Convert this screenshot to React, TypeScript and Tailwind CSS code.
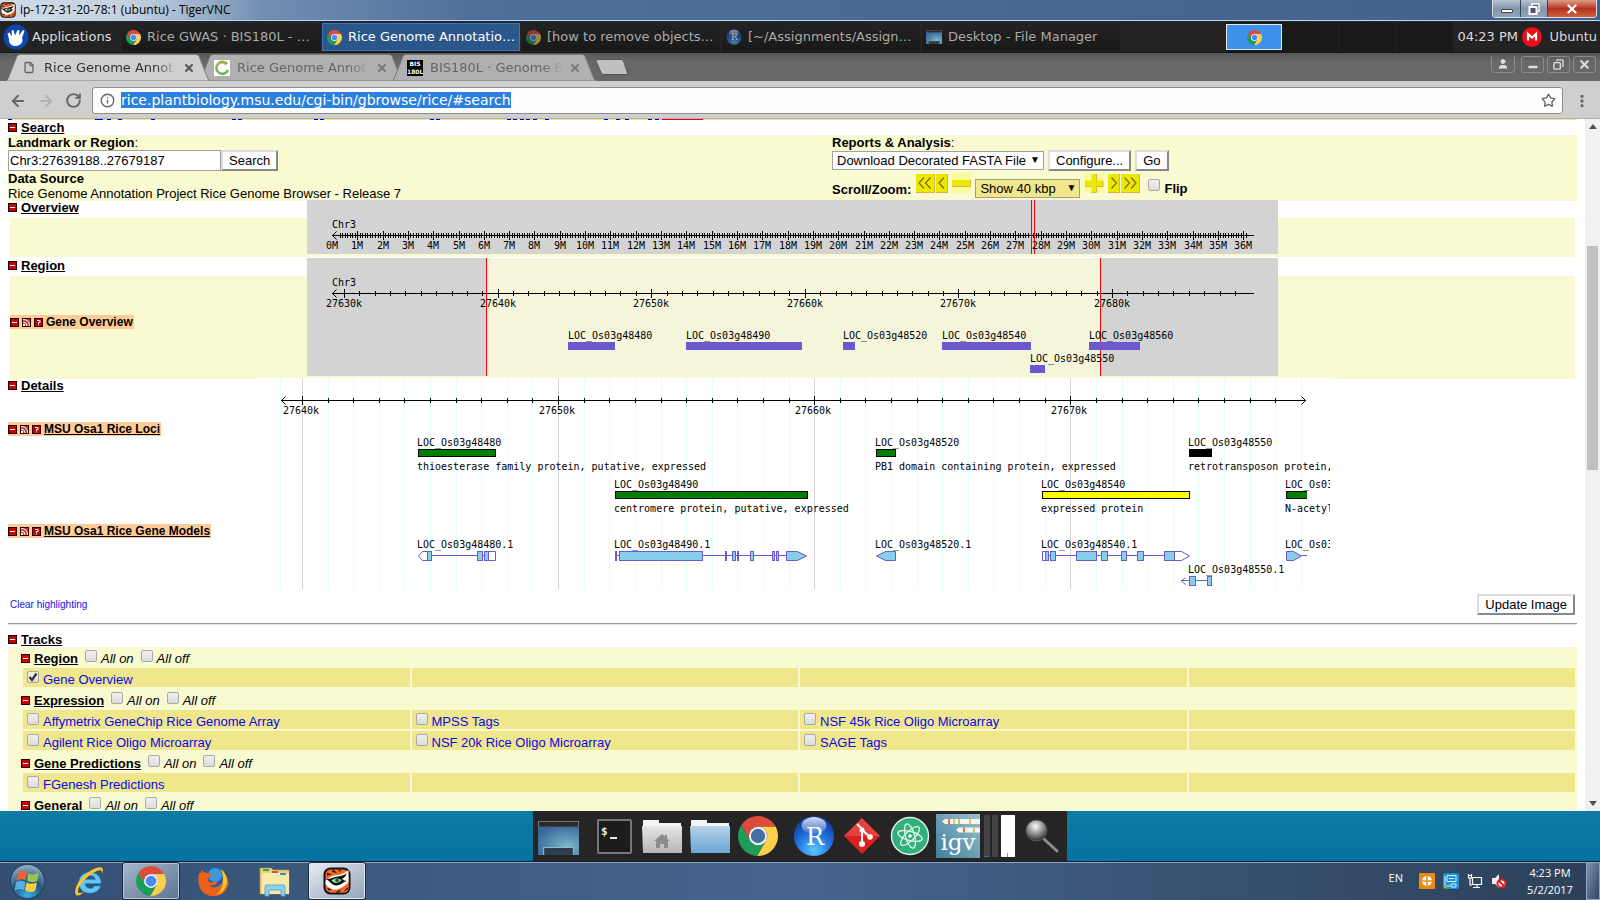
import React from "react";
import { User, Minus, X, Copy, Star, Info, File, ArrowLeft, ArrowRight, RotateCw, MoreVertical } from "lucide-react";

/* ---------- logos ---------- */

const BLADE = "M24 13H45.3A24 24 0 0 0 3.82 11.05L14.47 29.5A11 11 0 0 1 24 13Z";

function ChromeLogo({ className = "", core = "#4a8af4" }: { className?: string; core?: string }) {
  return (
    <svg viewBox="0 0 48 48" className={className} aria-hidden="true">
      <path d={BLADE} fill="#dd4b3e" />
      <path d={BLADE} fill="#fdd04b" transform="rotate(120 24 24)" />
      <path d={BLADE} fill="#1c9e59" transform="rotate(240 24 24)" />
      <circle cx="24" cy="24" r="11" fill="#f4f4f4" />
      <circle cx="24" cy="24" r="8.6" fill={core} />
    </svg>
  );
}

function RLogo({ className = "" }: { className?: string }) {
  return (
    <svg viewBox="0 0 44 44" className={className} aria-hidden="true">
      <defs>
        <radialGradient id="rball" cx="50%" cy="85%" r="75%">
          <stop offset="0" stopColor="#5cc8ff" />
          <stop offset="0.55" stopColor="#2474dd" />
          <stop offset="1" stopColor="#1340a8" />
        </radialGradient>
        <linearGradient id="rgloss" x1="0" y1="0" x2="0" y2="1">
          <stop offset="0" stopColor="#ffffff" stopOpacity="0.85" />
          <stop offset="1" stopColor="#ffffff" stopOpacity="0.1" />
        </linearGradient>
      </defs>
      <circle cx="22" cy="22" r="21" fill="url(#rball)" />
      <ellipse cx="22" cy="11" rx="13" ry="9" fill="url(#rgloss)" />
      <text x="23" y="31" textAnchor="middle" fontFamily="DejaVu Serif, serif" fontSize="25" fill="#fff">R</text>
    </svg>
  );
}

function TigerLogo({ className = "" }: { className?: string }) {
  return (
    <svg viewBox="0 0 28 28" className={className} aria-hidden="true">
      <rect x="0.5" y="0.5" width="27" height="27" rx="7" fill="#111" />
      <rect x="2.500" y="2.500" width="23" height="23" rx="5" fill="#f0682c" />
      <path d="M2.500 14C6 9 12 8 16 8c4-1 7-3 9.500-5v12c-3 7-8 9-13 9 -4-1-7-3-10-7z" fill="#fff" />
      <path d="M8 22c6 2 12-1 17.500-7v7q-1 3.500-4 3.500H7q-2-1-3-3z" fill="#f0682c" />
      <path d="M4 6l5 1.500L4 8.500zM10 2.500l4 3.500-5-1zM17 2.500l1 2.500-3-2zM4 21l5 1-3 1.500zM12 25.500l6-3-2 3zM20 25l5-5v2z" fill="#111" />
      <path d="M3 12c4 0 6-1 9-2 4-1 9-1 12-4-1 3-3 5-5 6 2 1 3 2 5 2-4 1-6 4-10 4.500C9 19 8 15 3 12z" fill="#111" />
      <path d="M8.500 13.500c3-2.500 6-2.500 10-.5-2 3-7 4.500-10 .5z" fill="#9fe0a8" />
      <circle cx="14" cy="13.500" r="1.800" fill="#155a2c" />
    </svg>
  );
}

function DesktopLogo({ className = "" }: { className?: string }) {
  return (
    <svg viewBox="0 0 40 36" className={className} preserveAspectRatio="none" aria-hidden="true">
      <defs>
        <radialGradient id="desk" cx="70%" cy="70%" r="80%">
          <stop offset="0" stopColor="#7ab9c9" />
          <stop offset="1" stopColor="#3a679c" />
        </radialGradient>
      </defs>
      <rect x="0.5" y="0.5" width="39" height="6" fill="#2a2a2a" stroke="#777" />
      <rect x="0" y="6.5" width="40" height="29.5" fill="url(#desk)" />
      <path d="M5.500 36V28h29v8" fill="#2d3f4c" stroke="#8fb9cc" />
    </svg>
  );
}

function MouseLogo({ className = "" }: { className?: string }) {
  return (
    <svg viewBox="0 0 26 26" className={className} aria-hidden="true">
      <circle cx="13" cy="13" r="12.5" fill="#0c47b0" />
      <path d="M4.500 9.500l2-1 2.500 4L8.500 6.500l2-.5 1.500 5.500L14.500 6l2 .3-.5 5.200 4-5.500 1.500 1-2.500 7c1.500 3 0 7-5.500 8-5 .5-8-3-7.500-7z" fill="#fff" />
    </svg>
  );
}

function MinusBox() {
  return (
    <svg viewBox="0 0 9 9" className="h-[9px] w-[9px] shrink-0" aria-hidden="true">
      <rect width="9" height="9" fill="#200" />
      <rect x="1" y="1" width="7" height="7" fill="#c00" />
      <rect x="2" y="4" width="5" height="1" fill="#fff" />
    </svg>
  );
}

function ShareBox() {
  return (
    <svg viewBox="0 0 9 9" className="h-[9px] w-[9px] shrink-0" aria-hidden="true">
      <rect width="9" height="9" fill="#200" />
      <rect x="1" y="1" width="7" height="7" fill="#c33" />
      <path d="M1 1.500q6.500 0 6.500 6.500M1 4q4 0 4 4" fill="none" stroke="#fff" />
      <rect x="1" y="6" width="2" height="2" fill="#fff" />
    </svg>
  );
}

function HelpBox() {
  return (
    <svg viewBox="0 0 9 9" className="h-[9px] w-[9px] shrink-0" aria-hidden="true">
      <rect width="9" height="9" fill="#200" />
      <rect x="1" y="1" width="7" height="7" fill="#c00" />
      <path d="M3 2.500h3v2H4.500V6M4.500 6.500V7.500" fill="none" stroke="#fff" />
    </svg>
  );
}

/* ---------- shared controls ---------- */

function Check({ id, checked = false, label }: { id: string; checked?: boolean; label?: string }) {
  return (
    <span className="relative inline-block h-3 w-3 shrink-0">
      <input
        id={id}
        type="checkbox"
        defaultChecked={checked}
        aria-label={label}
        className="peer block h-3 w-3 appearance-none rounded-[2px] border border-[#a9a9a9] bg-linear-to-b from-[#f0f0f0] to-[#dcdcdc]"
      />
      <svg viewBox="0 0 12 12" className="pointer-events-none absolute inset-0 hidden h-3 w-3 peer-checked:block" aria-hidden="true">
        <path d="M2.500 6l2.500 3L9.500 2.500" fill="none" stroke="#333" strokeWidth="2.200" />
      </svg>
    </span>
  );
}

function PushButton({ children }: { children: React.ReactNode }) {
  return (
    <button className="h-[21px] border-2 border-t-[#dddddd] border-l-[#dddddd] border-r-[#888888] border-b-[#888888] bg-white px-[6px] text-[13px] leading-[17px] text-black">
      {children}
    </button>
  );
}

function Heading({ children }: { children: React.ReactNode }) {
  return (
    <h2 className="flex items-center gap-1 font-bold">
      <MinusBox />
      <span className="underline">{children}</span>
    </h2>
  );
}

function TrackLabel({ children, underline = false }: { children: React.ReactNode; underline?: boolean }) {
  return (
    <div className="flex h-[14px] w-fit items-center gap-[3px] bg-[#ffcc99] pr-px text-[12px] font-bold leading-[14px]">
      <MinusBox />
      <ShareBox />
      <HelpBox />
      <span className={underline ? "underline" : ""}>{children}</span>
    </div>
  );
}

/* ---------- genome drawings ---------- */

const MONO = "'DejaVu Sans Mono', monospace";
const SLATE = "#6a5acd";
const SKY = "#87ceeb";

function Label({ x, y, children, middle = false }: { x: number; y: number; children: React.ReactNode; middle?: boolean }) {
  return (
    <text x={x} y={y + 4} fontFamily={MONO} fontSize="10" textAnchor={middle ? "middle" : "start"} fill="#000">
      {children}
    </text>
  );
}

function Tick({ x, y, major }: { x: number; y: number; major: boolean }) {
  const half = major ? 4 : 2;
  return <rect x={Math.round(x)} y={y - half} width="1" height={half * 2 + 1} fill="#000" />;
}

function OverviewMap() {
  const ticks = Array.from({ length: 361 }, (_, i) => i + 1).filter((i) => i > 2);
  return (
    <svg width="971" height="54" viewBox="0 0 971 54" role="img" aria-label="Chromosome overview">
      <rect width="971" height="54" fill="#d3d3d3" />
      <Label x={25} y={24}>Chr3</Label>
      <rect x="25" y="35" width="922" height="1" fill="#000" />
      <path d="M29.500 31.500l-4 4 4 4" fill="none" stroke="#000" />
      {ticks.map((i) => (
        <Tick key={i} x={25 + i * 2.531} y={35} major={i % 10 === 0} />
      ))}
      <rect x="724" width="1" height="54" fill="#f00" />
      <rect x="727" width="1" height="54" fill="#f00" />
      {Array.from({ length: 37 }, (_, m) => (
        <Label key={m} x={Math.round(25 + m * 25.31)} y={45} middle>{m}M</Label>
      ))}
    </svg>
  );
}

const REGION_GENES = [
  { name: "LOC_Os03g48480", x: 261, w: 47, y: 0 },
  { name: "LOC_Os03g48490", x: 379, w: 116, y: 0 },
  { name: "LOC_Os03g48520", x: 536, w: 12, y: 0 },
  { name: "LOC_Os03g48540", x: 635, w: 89, y: 0 },
  { name: "LOC_Os03g48550", x: 723, w: 15, y: 23 },
  { name: "LOC_Os03g48560", x: 782, w: 51, y: 0 },
];

function RegionMap() {
  return (
    <svg width="971" height="118" viewBox="0 0 971 118" role="img" aria-label="Region overview">
      <rect width="971" height="118" fill="#d3d3d3" />
      <rect x="179" width="614" height="118" fill="#f5f5dc" />
      <Label x={25} y={24}>Chr3</Label>
      <rect x="25" y="35" width="922" height="1" fill="#000" />
      <path d="M29.500 31.500l-4 4 4 4" fill="none" stroke="#000" />
      {Array.from({ length: 59 }, (_, i) => (
        <Tick key={i} x={37 + i * 15.36} y={35} major={i % 10 === 0} />
      ))}
      <rect x="179" width="1" height="118" fill="#f00" />
      <rect x="793" width="1" height="118" fill="#f00" />
      {Array.from({ length: 6 }, (_, i) => (
        <Label key={i} x={Math.round(37 + i * 153.600)} y={45} middle>{27630 + i * 10}k</Label>
      ))}
      {REGION_GENES.map((g) => (
        <g key={g.name}>
          <rect x={g.x} y={84 + g.y} width={g.w} height="8" fill={SLATE} />
          <Label x={g.x} y={77 + g.y}>{g.name}</Label>
        </g>
      ))}
    </svg>
  );
}

const LOCI = [
  { name: "LOC_Os03g48480", note: "thioesterase family protein, putative, expressed", x: 162, w: 77, row: 0, fill: "#008000" },
  { name: "LOC_Os03g48490", note: "centromere protein, putative, expressed", x: 359, w: 192, row: 1, fill: "#008000" },
  { name: "LOC_Os03g48520", note: "PB1 domain containing protein, expressed", x: 620, w: 19, row: 0, fill: "#008000" },
  { name: "LOC_Os03g48540", note: "expressed protein", x: 786, w: 147, row: 1, fill: "#ffff00" },
  { name: "LOC_Os03g48550", note: "retrotransposon protein,", x: 933, w: 22, row: 0, fill: "#000000" },
];

const MODELS = [
  { name: "LOC_Os03g48480.1", x: 162, y: 0 },
  { name: "LOC_Os03g48490.1", x: 359, y: 0 },
  { name: "LOC_Os03g48520.1", x: 620, y: 0 },
  { name: "LOC_Os03g48540.1", x: 786, y: 0 },
  { name: "LOC_Os03g48550.1", x: 933, y: 25 },
  { name: "LOC_Os03g48560.1", x: 1030, y: 0 },
];

/* exon boxes: left, right, row offset */
const EXONS: [number, number, number][] = [
  [171, 175, 0], [221, 226, 0], [228, 232, 0],
  [359, 360, 0], [363, 446, 0], [469, 470, 0], [476, 479, 0], [481, 482, 0], [494, 497, 0], [516, 518, 0], [520, 522, 0],
  [789, 792, 0], [794, 799, 0], [820, 840, 0], [845, 851, 0], [865, 870, 0], [881, 887, 0], [908, 918, 0],
  [933, 939, 25], [951, 955, 25],
];

const INTRONS: [number, number, number][] = [
  [175, 221, 0], [226, 228, 0], [360, 363, 0], [446, 530, 0], [792, 908, 0], [925, 951, 25], [1046, 1051, 0],
];

function DetailsMap() {
  return (
    <svg width="1074" height="211" viewBox="0 0 1074 211" role="img" aria-label="Details">
      <rect width="1074" height="211" fill="#fff" />
      <rect x="24" width="1" height="211" fill="#e0ffff" />
      {Array.from({ length: 40 }, (_, i) => (
        <rect key={i} x={Math.round(46 + i * 25.61)} width="1" height="211" fill={i % 10 === 0 ? "#d3d3d3" : "#e0ffff"} />
      ))}
      <rect x="25" y="22" width="1025" height="1" fill="#000" />
      <path d="M29.500 18.500l-4 4 4 4M1045.500 18.500l4 4-4 4" fill="none" stroke="#000" />
      {Array.from({ length: 39 }, (_, i) => (
        <Tick key={i} x={46 + i * 25.61} y={22} major={i % 10 === 0} />
      ))}
      {Array.from({ length: 4 }, (_, i) => (
        <Label key={i} x={Math.round(45 + i * 256.100)} y={32} middle>{27640 + i * 10}k</Label>
      ))}
      {LOCI.map((g) => (
        <g key={g.name}>
          <rect x={g.x + 0.5} y={71.5 + g.row * 42} width={g.w} height="7" fill={g.fill} stroke="#000" />
          <Label x={g.x - 1} y={64 + g.row * 42}>{g.name}</Label>
          <Label x={g.x - 1} y={88 + g.row * 42}>{g.note}</Label>
        </g>
      ))}
      <path d="M1051 113.500h-20.500v7h20.500" fill="#008000" stroke="#000" />
      <Label x={1029} y={106}>LOC_Os03g48560</Label>
      <Label x={1029} y={130}>N-acetyltransferase</Label>
      {MODELS.map((m) => (
        <Label key={m.name} x={m.x - 1} y={166 + m.y}>{m.name}</Label>
      ))}
      {INTRONS.map(([a, b, y]) => (
        <rect key={a} x={a} y={177 + y} width={b - a} height="1" fill={SLATE} />
      ))}
      <g stroke={SLATE} fill="#fff">
        <path d="M171.500 173.500h-5l-4 4.500 4 4.500h5z" />
        <path d="M232.500 173.500h7v9h-7z" />
        <path d="M786.500 173.500h3v9h-3z" />
        <path d="M918.500 173.500h7l8 4.500-8 4.500h-7z" />
      </g>
      <g stroke={SLATE} fill={SKY}>
        {EXONS.map(([a, b, y]) => (
          <rect key={a} x={a + 0.5} y={173.5 + y} width={b - a} height="9" />
        ))}
        <path d="M530.500 173.500h11l9 4.500-9 4.500h-11z" />
        <path d="M639.500 173.500h-10l-9 4.500 9 4.500h10z" />
        <path d="M1030.500 173.500h7l8 4.500-8 4.500h-7z" />
      </g>
      <path d="M929.500 199.500l-4 3.500 4 3.500" fill="none" stroke={SLATE} />
    </svg>
  );
}

/* ---------- window chrome ---------- */

function TitleBar() {
  return (
    <header className="flex h-[22px] shrink-0 items-start justify-between border-b border-[#1c2a3c] bg-linear-to-r from-[#9fb6cf] via-[#4c6f9b] via-30% to-[#41618b] shadow-[inset_0_-1px_0_#c4d3e4]">
      <div className="flex h-5 items-center gap-1 rounded-r-full bg-linear-to-r from-white/50 via-white/50 to-transparent pr-8">
        <TigerLogo className="h-4 w-4" />
        <span className="font-['Open_Sans','Noto_Sans',sans-serif] text-[12px] leading-5 text-black">ip-172-31-20-78:1 (ubuntu) - TigerVNC</span>
      </div>
      <div className="mr-[3px] flex h-[18px] overflow-hidden rounded-b-[4px] border border-t-0 border-[#d5dde8]">
        <button aria-label="Minimize" className="flex w-7 items-center justify-center border-r border-[#32435a] bg-linear-to-b from-[#b9c4d2] via-[#8595aa] via-50% to-[#8fa3bd]">
          <span className="mt-1 h-1 w-3 rounded-[1px] border border-[#445] bg-white" />
        </button>
        <button aria-label="Restore" className="flex w-[27px] items-center justify-center border-r border-[#32435a] bg-linear-to-b from-[#b9c4d2] via-[#8595aa] via-50% to-[#8fa3bd]">
          <svg viewBox="0 0 12 12" className="h-3 w-3" aria-hidden="true">
            <path d="M4 1h7v7H4z" fill="#556" stroke="#fff" strokeWidth="1.500" />
            <path d="M1.500 4h7v7h-7z" fill="#556" stroke="#fff" strokeWidth="2" />
          </svg>
        </button>
        <button aria-label="Close" className="flex w-12 items-center justify-center bg-linear-to-b from-[#dd9c8c] via-[#b5331c] via-50% to-[#d0603e]">
          <X className="h-[14px] w-[14px] text-white" strokeWidth={4} />
        </button>
      </div>
    </header>
  );
}

const TASKS = [
  { text: "Rice GWAS · BIS180L - …", icon: "chrome" },
  { text: "Rice Genome Annotatio…", icon: "chrome", active: true },
  { text: "[how to remove objects…", icon: "chrome", dim: true },
  { text: "[~/Assignments/Assign…", icon: "r", dim: true },
  { text: "Desktop - File Manager", icon: "desk" },
];

function TopPanel() {
  return (
    <nav className="flex h-[31px] shrink-0 items-center justify-between border-b border-[#151515] bg-[#232323] font-['DejaVu_Sans',sans-serif] text-[13px] text-[#dcdcdc]">
      <div className="flex h-full items-center">
        <button className="flex w-[121px] items-center gap-[3px] pl-[3px]">
          <MouseLogo className="h-[26px] w-[26px]" />
          Applications
        </button>
        {TASKS.map((t) => (
          <button
            key={t.text}
            className={
              t.active
                ? "mx-px flex h-7 w-[198px] items-center gap-[6px] whitespace-nowrap border border-[#3c76b8] bg-[#2b568a] pl-1 text-white"
                : "mx-px flex h-7 w-[198px] items-center gap-[6px] whitespace-nowrap bg-linear-to-b from-[#232323] to-[#191919] pl-1 text-[#aaaaaa]"
            }
          >
            {t.icon === "chrome" && <ChromeLogo className={t.dim ? "h-[15px] w-[15px] opacity-60" : "h-[15px] w-[15px]"} />}
            {t.icon === "r" && <RLogo className="h-4 w-4 opacity-60" />}
            {t.icon === "desk" && <DesktopLogo className="h-[14px] w-4" />}
            {t.text}
          </button>
        ))}
      </div>
      <div className="flex h-full items-center">
        <div className="flex h-full items-center bg-[#191919]">
          <button aria-label="Workspace 1" className="flex h-[26px] w-14 items-center justify-center border border-[#e8e8e8] bg-[#3f92ea]">
            <ChromeLogo className="h-[15px] w-[15px]" />
          </button>
          <button aria-label="Workspace 2" className="h-full w-[57px] border-r border-[#232323]" />
          <button aria-label="Workspace 3" className="h-full w-[57px] border-r border-[#232323]" />
          <button aria-label="Workspace 4" className="h-full w-[57px]" />
        </div>
        <span className="w-[69px] pl-1 whitespace-nowrap">04:23 PM</span>
        <svg viewBox="0 0 20 20" className="h-5 w-5" aria-hidden="true">
          <circle cx="10" cy="10" r="10" fill="#e8101a" />
          <path d="M6 13.500V7L10 10.500l4-3.500v6.500" fill="none" stroke="#fff" strokeWidth="2.200" />
        </svg>
        <span className="pl-[7px] pr-[3px]">Ubuntu</span>
      </div>
    </nav>
  );
}

function TabShape({ fill }: { fill: string }) {
  return (
    <svg viewBox="0 0 206 27" preserveAspectRatio="none" className="absolute inset-0 h-full w-full" aria-hidden="true">
      <path d="M0 27L2 25L11 2.500Q12 0.500 14 0.500H191Q193 0.500 194 2.500L203 25L206 27Z" fill={fill} stroke="#7b7b7b" strokeWidth="1" />
    </svg>
  );
}

const TABS = [
  { text: "Rice Genome Annotation", kind: "file" },
  { text: "Rice Genome Annotation", kind: "ring" },
  { text: "BIS180L · Genome Bio", kind: "bis" },
];

function TabStrip() {
  return (
    <div className="flex h-[28px] shrink-0 items-start justify-between bg-linear-to-b from-[#565656] to-[#686868] to-30% font-['DejaVu_Sans',sans-serif] text-[13px]">
      <div className="flex h-full items-end pl-[6px]">
        {TABS.map((t, i) => (
          <div key={i} className={i === 0 ? "relative z-10 -mr-3 h-[27px] w-[205px]" : "relative -mr-3 h-[27px] w-[205px]"}>
            <TabShape fill={i === 0 ? "#cfcfcf" : "#b0b0b0"} />
            <div className={i === 0 ? "relative flex h-full items-center pl-[15px] text-[#333333]" : "relative flex h-full items-center pl-[15px] text-[#666666]"}>
              {t.kind === "file" && <File className="ml-[2px] mr-[9px] h-[15px] w-3 text-[#666]" strokeWidth={2.6} />}
              {t.kind === "ring" && (
                <svg viewBox="0 0 16 16" className="mr-[7px] h-4 w-4" aria-hidden="true">
                  <rect width="16" height="16" fill="#fff" />
                  <path d="M13 4A6 6 0 1 0 14 10" fill="none" stroke="#6fb84b" strokeWidth="2.500" />
                  <path d="M12 5A5 5 0 0 0 3 7" fill="none" stroke="#e0a848" strokeWidth="1.500" />
                </svg>
              )}
              {t.kind === "bis" && (
                <span className="mr-[7px] block h-4 w-4 bg-black text-center text-[6px] font-bold leading-[8px] text-white">BIS 180L</span>
              )}
              <span className="w-[132px] overflow-hidden whitespace-nowrap [mask-image:linear-gradient(to_right,black_85%,transparent)]">{t.text}</span>
              <button aria-label="Close tab" className={i === 0 ? "ml-[7px] text-[#555555]" : "ml-[7px] text-[#7a7a7a]"}>
                <X className="h-3 w-3" strokeWidth={4} />
              </button>
            </div>
          </div>
        ))}
        <button aria-label="New tab" className="ml-[10px] self-center">
          <svg viewBox="0 0 34 16" className="block h-4 w-[34px]" aria-hidden="true">
            <path d="M2 .5H26Q28 .5 28.500 2L33 15.500H9Q7 15.500 6 13.500L1 2Z" fill="#c0c0c0" stroke="#555" />
          </svg>
        </button>
      </div>
      <div className="mr-1 mt-[3px] flex h-[17px] gap-[3px] text-[#dddddd]">
        <button aria-label="Profile" className="mr-[3px] flex w-6 items-center justify-center rounded-b-[4px] border border-t-0 border-[#8b8b8b]">
          <User className="h-3 w-3" fill="currentColor" />
        </button>
        <button aria-label="Minimize" className="flex w-[23px] items-center justify-center rounded-[3px] border border-[#8b8b8b]">
          <Minus className="mt-1 h-3 w-3" strokeWidth={5} />
        </button>
        <button aria-label="Restore" className="flex w-[23px] items-center justify-center rounded-[3px] border border-[#8b8b8b]">
          <Copy className="h-[11px] w-[11px] -scale-x-100" strokeWidth={3} />
        </button>
        <button aria-label="Close" className="flex w-[23px] items-center justify-center rounded-[3px] border border-[#8b8b8b]">
          <X className="h-[13px] w-[13px]" strokeWidth={4} />
        </button>
      </div>
    </div>
  );
}

function Toolbar() {
  return (
    <div className="flex h-[38px] shrink-0 items-center border-b border-[#b0b0b0] bg-[#cfcfcf] pt-[2px] text-[#666666]">
      <div className="flex w-[92px] items-center gap-[10px] pl-[9px]">
        <button aria-label="Back"><ArrowLeft className="h-[18px] w-[18px]" strokeWidth={2.5} /></button>
        <button aria-label="Forward" className="text-[#b4b4b4]"><ArrowRight className="h-[18px] w-[18px]" strokeWidth={2.5} /></button>
        <button aria-label="Reload"><RotateCw className="h-[17px] w-[17px]" strokeWidth={2.8} /></button>
      </div>
      <div className="flex h-[27px] min-w-0 flex-1 items-center gap-[6px] rounded-[3px] border border-[#8e8e8e] bg-[#fdfdfd] pl-[7px] pr-[6px]">
        <Info className="h-[15px] w-[15px] shrink-0" strokeWidth={2.2} />
        <div className="min-w-0 flex-1 font-['DejaVu_Sans',sans-serif] text-[14px] leading-[17px]">
          <a href="#search" className="bg-[#2a80dc] text-white">rice.plantbiology.msu.edu/cgi-bin/gbrowse/rice/#search</a>
        </div>
        <Star className="h-[15px] w-[15px] shrink-0" strokeWidth={2.2} />
      </div>
      <button aria-label="Menu" className="flex w-[37px] justify-center"><MoreVertical className="h-4 w-4" strokeWidth={3} /></button>
    </div>
  );
}

/* ---------- page ---------- */

function ClippedRow() {
  const dashes = [8, 95, 99, 107, 118, 151, 232, 238, 314, 320, 430, 436, 507, 513, 520, 526, 533, 545, 604, 616, 625, 648, 655];
  return (
    <svg className="block h-[2px] w-full" aria-hidden="true">
      <rect width="100%" height="1" fill="#f0e68c" />
      {dashes.map((x) => (
        <rect key={x} x={x - 8} width="4" height="1" fill="#00c" />
      ))}
      <rect x="654" width="41" height="1" fill="#e00" />
    </svg>
  );
}

function Arrows({ dir, count, label }: { dir: "left" | "right"; count: number; label: string }) {
  return (
    <button aria-label={label} className={count === 2 ? "h-[19px] w-[19px] border-r border-b border-[#e0b040] bg-[#eaea00]" : "h-[19px] w-3 border-r border-b border-[#e0b040] bg-[#eaea00]"}>
      <svg viewBox={count === 2 ? "0 0 18 18" : "0 0 11 18"} className="block h-full w-full" aria-hidden="true">
        <path
          d={
            dir === "left"
              ? count === 2 ? "M8 3.500L3 9l5 5.500M14.500 3.500l-5 5.500 5 5.500" : "M8 3.500L3 9l5 5.500"
              : count === 2 ? "M3.500 3.500l5 5.500-5 5.500M10 3.500l5 5.500-5 5.500" : "M3.500 3.500L8.500 9L3.500 14.500"
          }
          fill="none"
          stroke="#8f5f00"
          strokeWidth="1.200"
        />
      </svg>
    </button>
  );
}

function SearchPanel() {
  return (
    <div className="grid grid-cols-[824fr_745fr] bg-[#fafad2]">
      <div>
        <label htmlFor="landmark" className="block h-[15px] font-bold leading-[15px]">Landmark or Region<span className="font-normal">:</span></label>
        <div className="flex h-[21px]">
          <input id="landmark" defaultValue="Chr3:27639188..27679187" className="w-[213px] border border-[#a0a0a0] bg-white px-px text-[13px] text-black" />
          <PushButton>Search</PushButton>
        </div>
        <div className="h-[15px] font-bold leading-[15px]">Data Source</div>
        <div className="h-[15px] whitespace-nowrap leading-[15px]">Rice Genome Annotation Project Rice Genome Browser - Release 7</div>
      </div>
      <div>
        <label htmlFor="report" className="block h-[15px] font-bold leading-[15px]">Reports &amp; Analysis<span className="font-normal">:</span></label>
        <div className="flex h-[21px] items-center gap-1">
          <span className="relative">
            <select id="report" className="block h-[19px] w-[212px] appearance-none border border-[#a0a0a0] bg-white pl-1 text-[13px] leading-[17px] text-black">
              <option>Download Decorated FASTA File</option>
            </select>
            <span className="pointer-events-none absolute right-1 top-0 text-[10px] leading-[17px]">▼</span>
          </span>
          <PushButton>Configure...</PushButton>
          <PushButton>Go</PushButton>
        </div>
        <div className="flex h-[28px] items-start pt-[2px]">
          <label htmlFor="span" className="pt-2 pr-[5px] font-bold leading-[17px]">Scroll/Zoom:</label>
          <div className="flex gap-px pt-px">
            <Arrows dir="left" count={2} label="Scroll left far" />
            <Arrows dir="left" count={1} label="Scroll left" />
          </div>
          <button aria-label="Zoom out" className="mx-1 flex h-5 w-[19px] items-center bg-[#fafa9a]">
            <span className="h-[7px] w-full border-r border-b border-[#e0b040] bg-[#eaea00]" />
          </button>
          <span className="relative pt-[6px]">
            <select id="span" className="block h-[19px] w-[105px] appearance-none border border-[#a0a080] bg-[#f0e68c] pl-1 text-[13px] leading-[17px] text-black">
              <option>Show 40 kbp</option>
            </select>
            <span className="pointer-events-none absolute right-1 top-[6px] text-[10px] leading-[17px]">▼</span>
          </span>
          <button aria-label="Zoom in" className="mx-1 h-5 w-5 bg-[#fafa9a]">
            <svg viewBox="0 0 20 20" className="block h-5 w-5" aria-hidden="true">
              <path d="M7.500 1h5v6.500H19v6h-6.500V19.500h-5V13.500H1v-6h6.500z" fill="#eaea00" />
              <path d="M12.500 1v6.500M19 8v5.500h-6.500v6h-5M1 13.500h6.500" fill="none" stroke="#e0b040" />
            </svg>
          </button>
          <div className="flex gap-px pt-px">
            <Arrows dir="right" count={1} label="Scroll right" />
            <Arrows dir="right" count={2} label="Scroll right far" />
          </div>
          <div className="flex gap-1 pl-2 pt-[6px]">
            <Check id="flip" />
            <label htmlFor="flip" className="pt-px font-bold leading-[17px]">Flip</label>
          </div>
        </div>
      </div>
    </div>
  );
}

function MapSection({ title, className, map, children }: { title: string; className: string; map: React.ReactNode; children: React.ReactNode }) {
  return (
    <section className={className}>
      <div className="col-start-1 row-start-1 flex justify-center [&>svg]:block [&>svg]:shrink-0">{map}</div>
      <div className="col-start-1 row-start-1 -z-10 flex flex-col">
        <div className="flex h-[18px] items-start"><Heading>{title}</Heading></div>
        {children}
      </div>
    </section>
  );
}

const GROUPS = [
  { name: "Region", rows: [["Gene Overview", "", "", ""]] },
  {
    name: "Expression",
    rows: [
      ["Affymetrix GeneChip Rice Genome Array", "MPSS Tags", "NSF 45k Rice Oligo Microarray", ""],
      ["Agilent Rice Oligo Microarray", "NSF 20k Rice Oligo Microarray", "SAGE Tags", ""],
    ],
  },
  { name: "Gene Predictions", rows: [["FGenesh Predictions", "", "", ""]] },
  { name: "General", rows: [] as string[][] },
];

function Tracks() {
  return (
    <div className="bg-[#fafad2] pb-8 pl-[13px]">
      {GROUPS.map((g) => (
        <div key={g.name}>
          <div className="flex h-[19px] items-center pt-[3px]">
            <Heading>{g.name}</Heading>
            {["on", "off"].map((s) => (
              <span key={s} className="ml-[7px] flex items-start gap-1">
                <Check id={`${g.name}-${s}`} />
                <label htmlFor={`${g.name}-${s}`} className="pt-px italic leading-[15px]">All {s}</label>
              </span>
            ))}
          </div>
          {g.rows.length > 0 && (
            <table className="w-full table-fixed border-separate border-spacing-[2px]">
              <tbody>
                {g.rows.map((row, r) => (
                  <tr key={r}>
                    {row.map((cell, c) => (
                      <td key={c} className="h-[19px] bg-[#f0e68c] p-0">
                        {cell && (
                          <span className="flex h-[19px] items-start gap-1 pl-1 pt-[3px]">
                            <Check id={cell} checked={cell === "Gene Overview"} label={cell} />
                            <a href="#track" className="leading-[17px] text-[#0808ea]">{cell}</a>
                          </span>
                        )}
                      </td>
                    ))}
                  </tr>
                ))}
              </tbody>
            </table>
          )}
        </div>
      ))}
    </div>
  );
}

function Page() {
  return (
    <div className="flex min-h-0 flex-1 bg-white font-['Liberation_Sans',Arial,sans-serif] text-[13px] leading-[15px] text-black">
      <main className="isolate min-w-0 flex-1 overflow-hidden px-2">
        <ClippedRow />
        <div className="flex h-[14px] items-end"><Heading>Search</Heading></div>
        <SearchPanel />
        <MapSection title="Overview" className="relative z-10 -mt-px grid isolate" map={<OverviewMap />}>
          <div className="mx-[2px] h-[39px] bg-[#fafad2]" />
        </MapSection>
        <MapSection title="Region" className="relative mt-px grid isolate" map={<RegionMap />}>
          <div className="mx-[2px] h-[103px] bg-[#fafad2] pt-[39px]">
            <TrackLabel>Gene Overview</TrackLabel>
          </div>
        </MapSection>
        <MapSection title="Details" className="relative -mt-px grid isolate" map={<DetailsMap />}>
          <div className="flex flex-col gap-[88px] pt-[26px]">
            <TrackLabel underline>MSU Osa1 Rice Loci</TrackLabel>
            <TrackLabel underline>MSU Osa1 Rice Gene Models</TrackLabel>
          </div>
        </MapSection>
        <div className="mx-[2px] mt-[5px] flex items-center justify-between">
          <a href="#clear" className="text-[10px] text-[#1111ee]">Clear highlighting</a>
          <PushButton>Update Image</PushButton>
        </div>
        <hr className="mt-2 h-[2px] border-t border-b border-t-[#9a9a9a] border-b-[#e4e4e4]" />
        <div className="mt-2 flex h-[14px] items-end"><Heading>Tracks</Heading></div>
        <Tracks />
      </main>
      <div className="flex w-[15px] shrink-0 flex-col items-center justify-between bg-[#f1f1f1] py-[5px]" aria-hidden="true">
        <svg viewBox="0 0 8 5" className="h-[5px] w-2"><path d="M0 5L4 0l4 5z" fill="#505050" /></svg>
        <div className="flex w-full flex-1 flex-col items-center">
          <div className="basis-[17.4%]" />
          <div className="w-[11px] basis-[33.3%] bg-[#c1c1c1]" />
        </div>
        <svg viewBox="0 0 8 5" className="h-[5px] w-2"><path d="M0 0h8L4 5z" fill="#505050" /></svg>
      </div>
    </div>
  );
}

/* ---------- dock ---------- */

function Folder({ home = false }: { home?: boolean }) {
  return (
    <svg viewBox="0 0 42 36" className="h-9 w-[42px]" aria-hidden="true">
      <defs>
        <linearGradient id={home ? "fh" : "fb"} x1="0" y1="0" x2="0" y2="1">
          <stop offset="0" stopColor={home ? "#e6e6e6" : "#b5d3ea"} />
          <stop offset="1" stopColor={home ? "#b5b5b5" : "#6aa5d3"} />
        </linearGradient>
      </defs>
      <path d="M2 5V2h16v3h22v5H2z" fill="#f4f4f4" />
      <path d="M1 8h40v27H2z" fill={home ? "url(#fh)" : "url(#fb)"} />
      {home && <path d="M21 16l-8 7h2v7h4v-4h4v4h4v-7h2l-3-2.500V17h-2v1.500z" fill="#8c8c8c" />}
    </svg>
  );
}

function Slot({ label, children }: { label: string; children: React.ReactNode }) {
  return <button aria-label={label} className="flex h-[50px] w-12 items-center justify-center">{children}</button>;
}

function Dock() {
  return (
    <div className="flex h-[50px] shrink-0 justify-center bg-linear-to-b from-[#0e7ba5] to-[#0573a1]">
      <div className="flex items-center bg-[#252525] px-px">
        <Slot label="Show desktop"><DesktopLogo className="mt-1 h-[34px] w-[41px]" /></Slot>
        <div className="w-2" />
        <Slot label="Terminal">
          <svg viewBox="0 0 35 35" className="h-[35px] w-[35px]" aria-hidden="true">
            <rect x="1" y="1" width="33" height="33" rx="1" fill="#1c1c1c" stroke="#777" strokeWidth="2" />
            <text x="4" y="16" fontFamily={MONO} fontSize="11" fontWeight="bold" fill="#e8e8e8">$</text>
            <rect x="13" y="18" width="7" height="2" fill="#e8e8e8" />
          </svg>
        </Slot>
        <Slot label="Home folder"><Folder home /></Slot>
        <Slot label="Folder"><Folder /></Slot>
        <Slot label="Chrome"><ChromeLogo className="h-10 w-10" core="#44719f" /></Slot>
        <div className="w-2" />
        <Slot label="RStudio"><RLogo className="h-[42px] w-[42px]" /></Slot>
        <Slot label="Git">
          <svg viewBox="0 0 38 38" className="h-[38px] w-[38px]" aria-hidden="true">
            <path d="M19 1l18 18-18 18L1 19z" fill="#dc1f1f" />
            <path d="M19 1l18 18H1z" fill="#ea6660" opacity="0.500" />
            <path d="M14 7l5 5v15M19 13l7 6" stroke="#fff" strokeWidth="2" fill="none" />
            <circle cx="19" cy="13" r="2.500" fill="#fff" />
            <circle cx="19" cy="27" r="3" fill="#fff" />
            <circle cx="27" cy="20" r="2.800" fill="#fff" />
          </svg>
        </Slot>
        <Slot label="Atom">
          <svg viewBox="0 0 40 40" className="h-10 w-10" aria-hidden="true">
            <circle cx="20" cy="20" r="18.500" fill="#31b07c" stroke="#dfeee6" strokeWidth="1.500" />
            <g fill="none" stroke="#e6f7ef" strokeWidth="1.300">
              <ellipse cx="20" cy="20" rx="12.500" ry="4.500" transform="rotate(15 20 20)" />
              <ellipse cx="20" cy="20" rx="12.500" ry="4.500" transform="rotate(75 20 20)" />
              <ellipse cx="20" cy="20" rx="12.500" ry="4.500" transform="rotate(135 20 20)" />
            </g>
            <circle cx="20" cy="20" r="1.800" fill="#fff" />
          </svg>
        </Slot>
        <Slot label="IGV">
          <svg viewBox="0 0 44 44" className="h-11 w-11" aria-hidden="true">
            <defs>
              <linearGradient id="igv" x1="1" y1="0" x2="0" y2="1">
                <stop offset="0" stopColor="#9cc0cf" />
                <stop offset="1" stopColor="#3c7f9b" />
              </linearGradient>
            </defs>
            <rect width="44" height="44" fill="url(#igv)" />
            <path d="M6 7.500L9 5h35v5H9zM20 16l3-2.500h21v5H23z" fill="#f5f5f0" />
            <path d="M13 5v5M28 13.500v5" stroke="#e8603c" strokeWidth="1.800" />
            <path d="M18 5v5M34 5v5" stroke="#f0b030" strokeWidth="1.500" />
            <path d="M23 5v5M38 13.500v5" stroke="#9aba4a" strokeWidth="1.500" />
            <text x="22" y="36" textAnchor="middle" fontFamily="DejaVu Serif, serif" fontSize="23" fill="#fff">igv</text>
          </svg>
        </Slot>
        <svg viewBox="0 0 36 44" className="h-11 w-9" aria-hidden="true">
          <rect x="2" y="1" width="6" height="42" fill="#444" />
          <rect x="10" y="1" width="6" height="42" fill="#444" />
          <rect x="2" y="42" width="6" height="1" fill="#2a6db0" />
          <rect x="19" y="1" width="14" height="42" fill="#fff" />
          <rect x="25" y="39" width="1" height="4" fill="#0f0" />
        </svg>
        <Slot label="Search">
          <svg viewBox="0 0 40 40" className="h-10 w-10" aria-hidden="true">
            <defs>
              <radialGradient id="lens" cx="45%" cy="30%" r="65%">
                <stop offset="0" stopColor="#ffffff" />
                <stop offset="0.6" stopColor="#8a8a8a" />
                <stop offset="1" stopColor="#3c3c3c" />
              </radialGradient>
            </defs>
            <path d="M22 23l13 12" stroke="#8c8c8c" strokeWidth="3" strokeLinecap="round" />
            <circle cx="14.500" cy="14.500" r="10.500" fill="url(#lens)" stroke="#555" />
          </svg>
        </Slot>
      </div>
    </div>
  );
}

/* ---------- Windows taskbar ---------- */

function StartOrb() {
  return (
    <svg viewBox="0 0 38 38" className="h-[37px] w-[37px]" aria-hidden="true">
      <defs>
        <radialGradient id="orb" cx="50%" cy="90%" r="90%">
          <stop offset="0" stopColor="#36b4e4" />
          <stop offset="0.5" stopColor="#23577f" />
          <stop offset="1" stopColor="#9cb4cb" />
        </radialGradient>
      </defs>
      <circle cx="19" cy="19" r="17.500" fill="url(#orb)" stroke="#1b3c5c" />
      <path d="M9.500 10c3-2.500 6-2.500 9-.5L17 18c-3-2-6-1.500-9.500.5z" fill="#e8633a" />
      <path d="M19.800 10.500c3 2 6.500 1.500 10.700-.5L29 18.500c-4 2-7.500 1.500-10.500-.5z" fill="#92c94c" />
      <path d="M7.200 20c3-2.500 6.500-2 9.500-.5L15.300 28c-3-2-6-1.500-9.500.5z" fill="#5ab0e6" />
      <path d="M18 20c3 2 7 1.500 10.700 0L27 28.500c-3.500 2-7.500 1.500-10.300-.5z" fill="#f9cd45" />
    </svg>
  );
}

function IeLogo() {
  return (
    <svg viewBox="0 0 32 32" className="h-8 w-8" aria-hidden="true">
      <path
        d="M28 18.500H12c.3 5.500 7.500 6.500 9.500 2.500H27.500C25 31 6 31 6 17.500 6 4 28 3.500 28 18.500zM12 14.500h10.500c-.8-5.500-9.800-5.500-10.500 0z"
        fill="#62c6f5"
        stroke="#2a8ed0"
        strokeWidth="0.600"
        fillRule="evenodd"
      />
      <path d="M3 30C-1 24 9 8 23 3c7-2.500 8 1 6 6 .5-4-1.500-4.500-5-3C14 10 4 22 5 27c1 2 4 1 7-1-4 4-7.500 5.500-9 4z" fill="#f8c528" />
    </svg>
  );
}

function FirefoxLogo() {
  return (
    <svg viewBox="0 0 32 32" className="h-8 w-8" aria-hidden="true">
      <circle cx="17" cy="14.500" r="12.500" fill="#2659a8" />
      <circle cx="18" cy="10" r="7" fill="#3d9ad8" />
      <path d="M2 8c1 0 2 0 3-3 1 2 3 3 6 3 2 0 4 1 3 3-1 1-3 1-3 3 0 3 3 4 5 3 3-1 4 0 4 1-2 3-6 3-8 2 5 5 14 1 14-6 1-3 0-6-2-9 8 6 9 14 5 20-6 9-22 8-26-2C1 18 1 13 2 8z" fill="#e8621c" />
      <path d="M24 4c6 5 8 13 4 19-2 4-6 6-9 7 7-5 9-14 5-26z" fill="#fbc42e" />
    </svg>
  );
}

function ExplorerLogo() {
  return (
    <svg viewBox="0 0 34 32" className="h-8 w-[34px]" aria-hidden="true">
      <path d="M2 3h11l2 2h16v24H2z" fill="#e9d27c" stroke="#b59a40" strokeWidth="0.600" />
      <path d="M4 8h27v21H4z" fill="#f7e9a8" />
      <path d="M5 4h6v2H5z" fill="#3da04c" />
      <path d="M14 6h6v2h-6z" fill="#d8543c" />
      <path d="M22 8h6v2h-6z" fill="#3f86d0" />
      <path d="M7 31V22q0-2 2-2h16q2 0 2 2v9h-4v-6H11v6z" fill="#8fd0ef" stroke="#4b9cc8" strokeWidth="0.800" />
    </svg>
  );
}

function Taskbar() {
  return (
    <footer className="flex h-[39px] shrink-0 items-stretch justify-between border-t border-[#122031] bg-linear-to-r from-[#354f72] via-[#45658f] to-[#2c4058] font-['Open_Sans','Noto_Sans',sans-serif] text-white shadow-[inset_0_1px_0_#8ea3bd]">
      <div className="flex items-center">
        <button aria-label="Start" className="flex w-[54px] justify-center"><StartOrb /></button>
        <div className="flex h-full gap-1 pl-[6px]">
          <button aria-label="Internet Explorer" className="flex w-[58px] items-center justify-center"><IeLogo /></button>
          <button aria-label="Chrome" className="flex w-[58px] items-center justify-center rounded-[3px] border border-[#1b2a3e] bg-linear-to-br from-[#a9b8cb] to-[#5d7492] shadow-[inset_0_0_0_1px_#b8c6d6]">
            <ChromeLogo className="h-[30px] w-[30px]" />
          </button>
          <button aria-label="Firefox" className="flex w-[58px] items-center justify-center"><FirefoxLogo /></button>
          <button aria-label="Explorer" className="flex w-[58px] items-center justify-center"><ExplorerLogo /></button>
          <button aria-label="TigerVNC" className="flex w-[58px] items-center justify-center rounded-[3px] border border-[#1b2a3e] bg-linear-to-br from-[#e8edf3] to-[#93a3b8] shadow-[inset_0_0_0_1px_#e3e9f0]">
            <TigerLogo className="h-7 w-7" />
          </button>
        </div>
      </div>
      <div className="flex items-center">
        <span className="mb-[6px] mr-4 text-[11px]">EN</span>
        <div className="flex gap-2">
          <svg viewBox="0 0 16 16" className="h-4 w-4" aria-hidden="true">
            <rect width="16" height="16" rx="1" fill="#e88a14" />
            <circle cx="8" cy="8" r="5" fill="#fff" />
            <path d="M8 2v12M2 8h12" stroke="#e88a14" strokeWidth="1.500" />
          </svg>
          <svg viewBox="0 0 16 16" className="h-4 w-4" aria-hidden="true">
            <rect width="16" height="16" rx="2" fill="#1f8fd6" />
            <path d="M4 2.500h9v6H4zM6 5.500h5M2 3v10h5M8 11h5v3H8z" fill="none" stroke="#d8f0ff" />
            <rect x="1" y="12" width="3" height="3" fill="#7cc242" />
          </svg>
          <svg viewBox="0 0 16 16" className="h-4 w-4" aria-hidden="true">
            <path d="M5.500 4.500h9v7h-9zM10 12v2M6 14.500h7M1 2.500h4M1.500 1v4h3V1M3 5v7h2" fill="none" stroke="#fff" strokeWidth="1.200" />
          </svg>
          <svg viewBox="0 0 16 16" className="h-4 w-4" aria-hidden="true">
            <path d="M1 5h3l4-4v14l-4-4H1z" fill="#e9edf2" />
            <circle cx="10.500" cy="10.500" r="4" fill="#fff" stroke="#e01b1b" strokeWidth="2" />
            <path d="M8 8l5 5" stroke="#e01b1b" strokeWidth="2" />
          </svg>
        </div>
        <div className="w-[79px] pl-[7px] text-center text-[11px] leading-[17px]">
          <div>4:23 PM</div>
          <div>5/2/2017</div>
        </div>
        <button aria-label="Show desktop" className="h-full w-[14px] border border-[#8ea3bd] bg-linear-to-br from-[#8496ad] to-[#2d4463]" />
      </div>
    </footer>
  );
}

export default function App() {
  return (
    <div className="flex h-screen flex-col overflow-hidden">
      <TitleBar />
      <TopPanel />
      <TabStrip />
      <Toolbar />
      <Page />
      <Dock />
      <Taskbar />
    </div>
  );
}
